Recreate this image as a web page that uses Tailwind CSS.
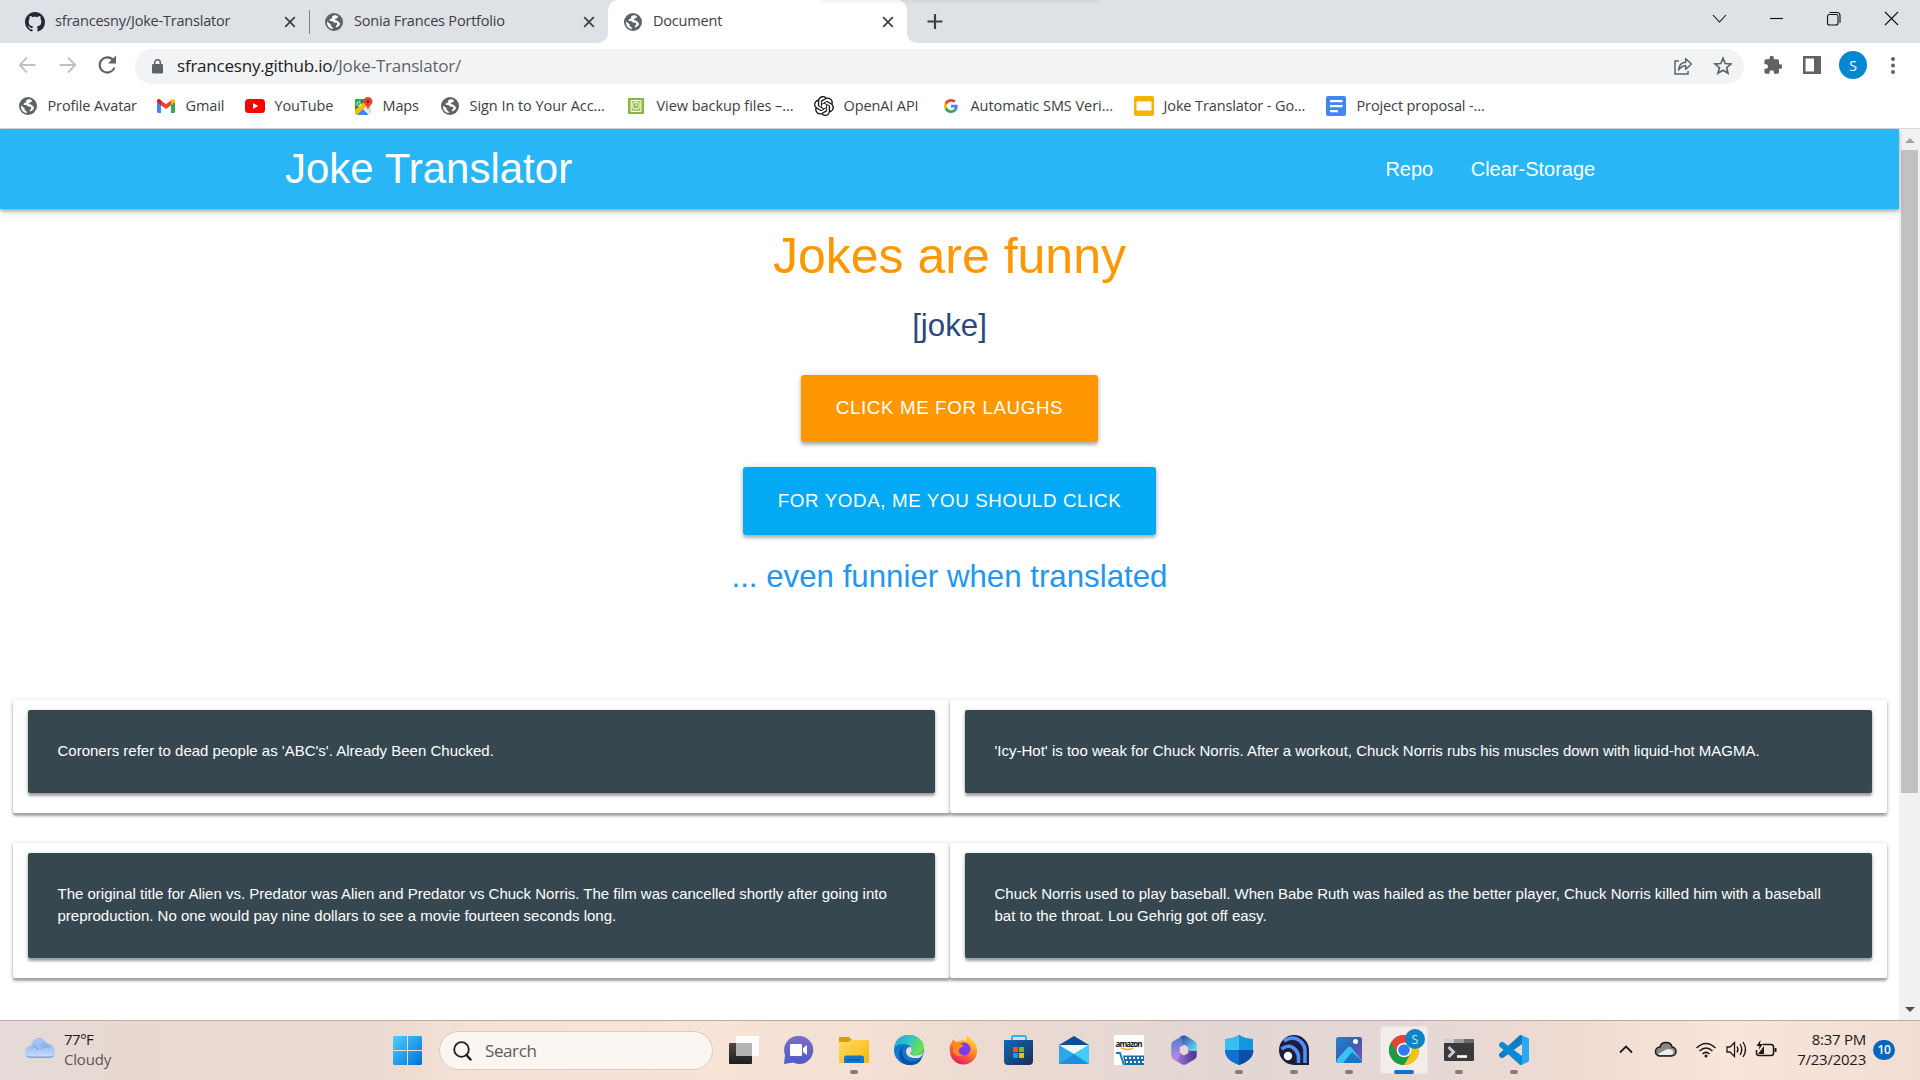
<!DOCTYPE html>
<html lang="en">
<head>
<meta charset="utf-8">
<title>Document</title>
<script src="https://cdn.jsdelivr.net/npm/@tailwindcss/browser@4"></script>
</head>
<body class="w-[1920px] h-[1080px] overflow-hidden bg-white flex flex-col font-['Open_Sans','Noto_Sans',sans-serif] text-[#3c4043]">
<svg class="hidden">
  <symbol id="globe" viewBox="0 0 18 18"><circle cx="9" cy="9" r="9" fill="#5f6368"/><path fill="#fff" d="M2 8.500l3.600 2.700v1.600l2.200 2v1.200C4.500 15.800 2 13 2 9.500zM10 2.100c-1 .8-2.500.4-2.900 1.600-.2.900.4 1.300-.2 1.900-.9.500-2.200.5-2.300 1.600 0 .8 1 1 2.200.9 1.200 0 1.700 1.500 2.800 1.600h2.200c.7 1 .5 1.900-.2 2.500-.7.600-.8 1.500-.8 2.400 2-.6 3.600-1.900 4.400-3.700-.8-1-.9-2.100-1.900-2.500-1.300-.3-1.700-1.500-3.300-1.300-.7-.7.200-1.400 1.200-1.500 1.100-.2 1.500-1.300 1.800-2.300z"/></symbol>
  <symbol id="x" viewBox="0 0 12 12"><path d="M1.200 1.200l9.600 9.600M10.800 1.200L1.200 10.800" stroke="#3c4043" stroke-width="1.700" fill="none"/></symbol>
</svg>

<!-- Tab strip -->
<header class="h-[43px] shrink-0 bg-[#dee1e6] flex items-stretch relative">
  <div class="w-[311px] h-[43px] flex items-center pl-[25px] border-r border-transparent">
    <svg class="w-5 h-5 shrink-0" viewBox="0 0 16 16" fill="#24292f"><path d="M8 0C3.580 0 0 3.580 0 8c0 3.540 2.290 6.530 5.470 7.590.4.070.55-.17.55-.38 0-.19-.01-.82-.01-1.490-2.010.37-2.530-.49-2.690-.94-.09-.23-.48-.94-.82-1.130-.28-.15-.68-.52-.01-.53.63-.01 1.080.58 1.230.82.72 1.210 1.870.87 2.330.66.07-.52.28-.87.51-1.070-1.780-.2-3.640-.89-3.640-3.950 0-.87.31-1.590.82-2.150-.08-.2-.36-1.020.08-2.120 0 0 .67-.21 2.200.82.64-.18 1.320-.27 2-.27s1.360.09 2 .27c1.530-1.040 2.200-.82 2.200-.82.44 1.100.16 1.920.08 2.120.51.56.82 1.270.82 2.150 0 3.070-1.870 3.750-3.650 3.950.29.25.54.73.54 1.480 0 1.070-.01 1.930-.01 2.200 0 .21.15.46.55.38A8.010 8.010 0 0 0 16 8c0-4.420-3.580-8-8-8z"/></svg>
    <span class="ml-[10px] -mt-[2px] w-[229px] text-[14.5px] tracking-[-0.2px] whitespace-nowrap">sfrancesny/Joke-Translator</span>
    <svg class="w-3 h-3 shrink-0"><use href="#x"/></svg>
  </div>
  <div class="w-[297px] flex items-center relative pl-[14px] before:absolute before:left-[-2px] before:top-[10px] before:w-px before:h-6 before:bg-[#808388]">
    <svg class="w-[18px] h-[18px] shrink-0"><use href="#globe"/></svg>
    <span class="ml-[11px] -mt-[2px] w-[229px] text-[14.5px] tracking-[-0.2px] whitespace-nowrap">Sonia Frances Portfolio</span>
    <svg class="w-3 h-3 shrink-0"><use href="#x"/></svg>
  </div>
  <div class="w-[299px] flex items-center bg-white rounded-t-[10px] relative pl-4">
    <svg class="absolute left-[-10px] bottom-0 w-[10px] h-[10px]"><path d="M10 0v10H0A10 10 0 0 0 10 0z" fill="#fff"/></svg>
    <svg class="absolute right-[-10px] bottom-0 w-[10px] h-[10px]"><path d="M0 0v10h10A10 10 0 0 1 0 0z" fill="#fff"/></svg>
    <svg class="w-[18px] h-[18px] shrink-0"><use href="#globe"/></svg>
    <span class="ml-[11px] -mt-[2px] w-[229px] text-[14.5px] tracking-[-0.2px]">Document</span>
    <svg class="w-3 h-3 shrink-0"><use href="#x"/></svg>
  </div>
  <svg class="ml-5 w-4 h-[43px]" viewBox="0 0 16 43"><path d="M8 14v15M.5 21.500h15" stroke="#3c4043" stroke-width="2.200"/></svg>
  <svg class="ml-auto w-[212px] h-[38px]" viewBox="0 0 212 38" fill="none" stroke="#111" stroke-width="1.100"><path d="M5 15l6.500 7 6.500-7"/><path d="M62 18.500h13"/><rect x="119.500" y="14.500" width="10.500" height="10.500" rx="2"/><path d="M121.500 12.500h7.500a3 3 0 0 1 3 3v7.500"/><path d="M177 12l13 13M190 12l-13 13"/></svg>
  <div class="absolute left-[820px] top-0 w-[280px] h-[5px] bg-linear-to-b from-black/5 to-transparent"></div>
</header>

<!-- Toolbar -->
<div class="h-[45px] shrink-0 flex items-center pl-[19px]">
  <svg class="w-[99px] h-[22px] mr-[17px] -mt-px" viewBox="0 0 99 22" fill="none"><g stroke="#bdc1c6" stroke-width="1.800"><path d="M16.500 11H1M8 3.500L.7 11 8 18.500M40.500 11H56M49 3.500l7.300 7.500-7.300 7.500"/></g><path d="M94.500 6.500A7.600 7.600 0 1 0 95.500 13.500" stroke="#5f6368" stroke-width="2.100"/><path d="M97 1.500v8h-8z" fill="#5f6368"/></svg>
  <div class="w-[1609px] h-[35px] rounded-full bg-[#f1f3f4] flex items-center pl-[17px] pr-3 mt-[1px]">
    <svg class="w-[11px] h-[15px]" viewBox="0 0 11 15"><rect y="5" width="11" height="9.500" rx="1.300" fill="#5f6368"/><path d="M2.700 6V3.600a2.800 2.800 0 0 1 5.600 0V6" fill="none" stroke="#5f6368" stroke-width="1.500"/></svg>
    <span class="ml-[14px] text-[17px] tracking-[-0.22px] text-[#5f6368] whitespace-nowrap"><span class="text-[#202124]">sfrancesny.github.io</span>/Joke-Translator/</span>
    <svg class="ml-auto w-[58px] h-5" viewBox="0 0 58 20" fill="none" stroke="#5f6368" stroke-width="1.500"><path d="M5 5H1v13h13v-3"/><path d="M4.500 14c.5-5 3-7.500 7.200-7.700V2.800L17.500 8l-5.800 5.200V9.800C8.500 9.800 6.500 11 4.500 14z" stroke-linejoin="round"/><path d="M49 2.200l2.200 5.300 5.800.5-4.400 3.700 1.400 5.600-5-3-5 3 1.400-5.600L41 8l5.800-.5z" stroke-width="1.700"/></svg>
  </div>
  <svg class="ml-5 w-[18px] h-[20px] -mt-px" viewBox="1.500 0.500 21 22.500" fill="#5f6368"><path d="M20.500 11H19V7c0-1.100-.9-2-2-2h-4V3.500a2.500 2.500 0 0 0-5 0V5H4c-1.100 0-2 .9-2 2v3.800h1.500a2.700 2.700 0 0 1 0 5.400H2V20c0 1.100.9 2 2 2h3.800v-1.500a2.700 2.700 0 0 1 5.400 0V22H17c1.100 0 2-.9 2-2v-4h1.500a2.500 2.500 0 0 0 0-5z"/></svg>
  <svg class="ml-[21px] w-[18px] h-[18px] -mt-px" viewBox="0 0 18 18"><path d="M0 0h18v18H0z" fill="#5f6368"/><path d="M2.500 2.500h8.500v13H2.500z" fill="#fff"/></svg>
  <div class="ml-[18px] -mt-px w-7 h-7 rounded-full bg-[#0288d1] text-white text-[14px] flex items-center justify-center">S</div>
  <svg class="ml-[24px] -mt-px w-1 h-[17px]" viewBox="0 0 4 17" fill="#5f6368"><circle cx="2" cy="2" r="2"/><circle cx="2" cy="8.500" r="2"/><circle cx="2" cy="15" r="2"/></svg>
</div>

<!-- Bookmarks -->
<nav class="h-[41px] shrink-0 border-b border-[#d5d7da] flex items-center pl-[19px] pb-[4px] text-[14.5px] tracking-[-0.12px] whitespace-nowrap [&_span]:-mt-[1px] [&_span]:-ml-[0.5px]">
  <div class="w-[138px] flex items-center gap-[11px]"><svg class="w-[18px] h-[18px]"><use href="#globe"/></svg><span>Profile Avatar</span></div>
  <div class="w-[88px] flex items-center gap-[11px]"><svg class="w-[18px] h-[14px]" viewBox="0 0 18 14"><path d="M0 2v10.500Q0 14 1.300 14H4V5z" fill="#4285f4"/><path d="M18 2v10.500q0 1.500-1.300 1.500H14V5z" fill="#34a853"/><path d="M4 1.200l5 4 5-4v5L9 10 4 6.200z" fill="#ea4335"/><path d="M14 1.200Q18-1.500 18 2.500V3l-4 3.200z" fill="#fbbc04"/><path d="M4 1.200Q0-1.500 0 2.500V3l4 3.200z" fill="#c5221f"/></svg><span>Gmail</span></div>
  <div class="w-[109px] flex items-center gap-[10px]"><svg class="w-5 h-[14px]" viewBox="0 0 20 14"><rect width="20" height="14" rx="3.500" fill="#f00"/><path d="M8 4l5.200 3L8 10z" fill="#fff"/></svg><span>YouTube</span></div>
  <div class="w-[87px] flex items-center gap-[10px]"><svg class="w-[19px] h-[19px]" viewBox="0 0 19 19"><path d="M2 2h10L3 17q-2 0-2-2V3.500Q1 2 2 2z" fill="#1e8e3e"/><path d="M1 13L12 3l2 5L4 18Q1 18 1 15z" fill="#fbbc04"/><path d="M1 10l8-8H3Q1 2 1 4z" fill="#34a853"/><path d="M3 18l6-6 6 6z" fill="#4285f4"/><path d="M10 11l6 6q1-1 1-2V9z" fill="#dadce0"/><path d="M14 0a4.500 4.500 0 0 1 4.500 4.500C18.500 8 15 8 14 13 13 8 9.500 8 9.500 4.500A4.500 4.500 0 0 1 14 0z" fill="#ea4335"/><circle cx="14" cy="4.500" r="1.600" fill="#8c1d18"/><path d="M6.500 5.500A2 2 0 1 0 7 7H5" fill="none" stroke="#fff" stroke-width=".9"/></svg><span>Maps</span></div>
  <div class="w-[187px] flex items-center gap-[11px]"><svg class="w-[18px] h-[18px]"><use href="#globe"/></svg><span class="tracking-[-0.05px]">Sign In to Your Acc...</span></div>
  <div class="w-[186px] flex items-center gap-[13px]"><svg class="w-4 h-4" viewBox="0 0 16 16"><path d="M0 0h16v16H0z" fill="#8bb53c"/><path d="M3 2.500h10v11H3z" fill="#a9cb6c" stroke="#fff"/><circle cx="8" cy="7.500" r="3.300" fill="#8bb53c" stroke="#fff"/><path d="M8 5.500v2.200h1.500" stroke="#fff" fill="none"/></svg><span class="tracking-[-0.05px]">View backup files –...</span></div>
  <div class="w-[127px] flex items-center gap-[10px]"><svg class="w-5 h-5" viewBox="0 0 24 24" fill="#111"><path d="M22.282 9.821a5.985 5.985 0 0 0-.516-4.910 6.046 6.046 0 0 0-6.510-2.900A6.065 6.065 0 0 0 4.981 4.182a5.985 5.985 0 0 0-3.998 2.900 6.046 6.046 0 0 0 .743 7.097 5.980 5.980 0 0 0 .511 4.911 6.051 6.051 0 0 0 6.515 2.900A5.985 5.985 0 0 0 13.260 24a6.056 6.056 0 0 0 5.772-4.206 5.990 5.990 0 0 0 3.998-2.900 6.056 6.056 0 0 0-.747-7.073zM13.260 22.430a4.476 4.476 0 0 1-2.876-1.041l.141-.08 4.779-2.758a.795.795 0 0 0 .392-.681v-6.737l2.020 1.169a.071.071 0 0 1 .038.052v5.583a4.504 4.504 0 0 1-4.494 4.494zM3.600 18.304a4.470 4.470 0 0 1-.535-3.014l.142.085 4.783 2.759a.771.771 0 0 0 .780 0l5.843-3.369v2.332a.080.080 0 0 1-.033.062L9.740 19.950a4.500 4.500 0 0 1-6.140-1.646zM2.340 7.896a4.485 4.485 0 0 1 2.366-1.973V11.600a.766.766 0 0 0 .388.676l5.815 3.355-2.020 1.168a.076.076 0 0 1-.071 0l-4.830-2.786A4.504 4.504 0 0 1 2.340 7.872zm16.597 3.855l-5.833-3.387L15.119 7.200a.076.076 0 0 1 .071 0l4.830 2.791a4.494 4.494 0 0 1-.676 8.105v-5.678a.790.790 0 0 0-.407-.667zm2.010-3.023l-.141-.085-4.774-2.782a.776.776 0 0 0-.785 0L9.409 9.230V6.897a.066.066 0 0 1 .028-.061l4.830-2.787a4.500 4.500 0 0 1 6.680 4.660zm-12.640 4.135l-2.020-1.164a.080.080 0 0 1-.038-.057V6.075a4.500 4.500 0 0 1 7.375-3.453l-.142.080L8.704 5.460a.795.795 0 0 0-.393.681zm1.097-2.365l2.602-1.500 2.607 1.500v2.999l-2.597 1.500-2.607-1.500z"/></svg><span>OpenAI API</span></div>
  <div class="w-[193px] flex items-center gap-[13px] pl-[3px]"><svg class="w-[14px] h-[14px]" viewBox="0 0 48 48"><path fill="#EA4335" d="M24 9.500c3.540 0 6.710 1.220 9.210 3.600l6.850-6.850C35.900 2.380 30.470 0 24 0 14.620 0 6.510 5.380 2.560 13.220l7.980 6.190C12.430 13.720 17.740 9.500 24 9.500z"/><path fill="#4285F4" d="M46.980 24.550c0-1.570-.15-3.090-.38-4.550H24v9.020h12.940c-.58 2.960-2.260 5.480-4.780 7.180l7.730 6c4.510-4.180 7.090-10.360 7.090-17.650z"/><path fill="#FBBC05" d="M10.530 28.590a14.500 14.500 0 0 1 0-9.180l-7.980-6.190a24 24 0 0 0 0 21.560z"/><path fill="#34A853" d="M24 48c6.480 0 11.930-2.130 15.890-5.810l-7.730-6c-2.150 1.450-4.920 2.300-8.160 2.300-6.260 0-11.570-4.220-13.470-9.910l-7.980 6.190C6.510 42.620 14.620 48 24 48z"/></svg><span class="tracking-[-0.05px]">Automatic SMS Veri...</span></div>
  <div class="w-[192px] flex items-center gap-[10px]"><svg class="w-5 h-5" viewBox="0 0 20 20"><rect width="20" height="20" rx="2" fill="#f5b400"/><path d="M2.500 5.500h15v9h-15z" fill="#fff"/></svg><span>Joke Translator - Go...</span></div>
  <div class="flex items-center gap-[11px]"><svg class="w-5 h-5" viewBox="0 0 20 20"><rect width="20" height="20" rx="2" fill="#4285f4"/><path d="M4 4h12.500v2.200H4zM4 9h12.500v2.200H4zM4 14h8v2.200H4z" fill="#fff"/></svg><span>Project proposal -...</span></div>
</nav>

<!-- Page -->
<div class="flex h-[891px] shrink-0">
  <main class="w-[1899px] font-['Liberation_Sans',Arial,sans-serif]">
    <div class="h-20 bg-[#29b6f6] shadow-[0_2px_3px_rgba(0,0,0,.25),0_4px_6px_rgba(0,0,0,.12)] px-[285px] flex items-center justify-between text-white relative">
      <h1 class="text-[42px] -mt-[2px]">Joke Translator</h1>
      <div class="flex text-[20px]"><a class="px-[18.75px]">Repo</a><a class="px-[18.75px]">Clear-Storage</a></div>
    </div>
    <section class="h-[491px] flex flex-col items-center">
      <h2 class="mt-[19px] h-[57px] leading-[57px] text-[50px] text-[#ff9800]">Jokes are funny</h2>
      <p class="mt-[23px] h-9 leading-9 text-[31.25px] text-[#2b4a7b]">[joke]</p>
      <button class="mt-[31px] h-[67px] px-[35px] rounded-[3px] bg-[#ff9800] text-white text-[18.75px] tracking-[0.625px] shadow-[0_2.5px_3px_rgba(0,0,0,.2),0_1px_6px_rgba(0,0,0,.2)]">CLICK ME FOR LAUGHS</button>
      <button class="mt-[25px] h-[68px] px-[35px] rounded-[3px] bg-[#03a9f4] text-white text-[18.75px] tracking-[0.625px] shadow-[0_2.5px_3px_rgba(0,0,0,.2),0_1px_6px_rgba(0,0,0,.2)]">FOR YODA, ME YOU SHOULD CLICK</button>
      <p class="mt-[24px] h-9 leading-9 text-[31.25px] text-[#2196f3]">... even funnier when translated</p>
    </section>
    <section class="pl-[13px] pr-3 grid grid-cols-2 gap-y-[30px] text-[15px] leading-[22px] text-white">
      <div class="h-[113px] rounded-[2px] px-[15px] pt-[10px] bg-white shadow-[0_2.5px_2.5px_rgba(0,0,0,.3),0_1px_5px_rgba(0,0,0,.18)]"><div class="h-[83px] rounded-[2px] bg-[#37474f] py-[30px] px-[29.5px] shadow-[0_2.5px_2.5px_rgba(0,0,0,.3),0_1px_5px_rgba(0,0,0,.18)]">Coroners refer to dead people as 'ABC's'. Already Been Chucked.</div></div>
      <div class="h-[113px] rounded-[2px] px-[15px] pt-[10px] bg-white shadow-[0_2.5px_2.5px_rgba(0,0,0,.3),0_1px_5px_rgba(0,0,0,.18)]"><div class="h-[83px] rounded-[2px] bg-[#37474f] py-[30px] px-[29.5px] shadow-[0_2.5px_2.5px_rgba(0,0,0,.3),0_1px_5px_rgba(0,0,0,.18)]">'Icy-Hot' is too weak for Chuck Norris. After a workout, Chuck Norris rubs his muscles down with liquid-hot MAGMA.</div></div>
      <div class="h-[135px] rounded-[2px] px-[15px] pt-[10px] bg-white shadow-[0_2.5px_2.5px_rgba(0,0,0,.3),0_1px_5px_rgba(0,0,0,.18)]"><div class="h-[105px] rounded-[2px] bg-[#37474f] py-[30px] px-[29.5px] shadow-[0_2.5px_2.5px_rgba(0,0,0,.3),0_1px_5px_rgba(0,0,0,.18)]">The original title for Alien vs. Predator was Alien and Predator vs Chuck Norris. The film was cancelled shortly after going into<br>preproduction. No one would pay nine dollars to see a movie fourteen seconds long.</div></div>
      <div class="h-[135px] rounded-[2px] px-[15px] pt-[10px] bg-white shadow-[0_2.5px_2.5px_rgba(0,0,0,.3),0_1px_5px_rgba(0,0,0,.18)]"><div class="h-[105px] rounded-[2px] bg-[#37474f] py-[30px] px-[29.5px] shadow-[0_2.5px_2.5px_rgba(0,0,0,.3),0_1px_5px_rgba(0,0,0,.18)]">Chuck Norris used to play baseball. When Babe Ruth was hailed as the better player, Chuck Norris killed him with a baseball<br>bat to the throat. Lou Gehrig got off easy.</div></div>
    </section>
  </main>
  <div class="w-[21px] bg-[#f1f1f1] flex flex-col items-center justify-between">
    <div class="flex flex-col items-center"><svg class="w-[10px] h-[21px]" viewBox="0 0 10 21"><path d="M0 14l5-5 5 5z" fill="#a3a3a3"/></svg><div class="w-[17px] h-[643px] bg-[#c1c1c1]"></div></div>
    <svg class="w-[10px] h-[21px]" viewBox="0 0 10 21"><path d="M0 8l5 5 5-5z" fill="#505050"/></svg>
  </div>
</div>

<!-- Taskbar -->
<footer class="h-[60px] shrink-0 border-t border-[#b9aaa5] bg-[linear-gradient(90deg,#e5dad9_0%,#e7d9d0_7%,#ebd9d2_14%,#ebdad1_20%,#f6e2d7_25%,#f7e4d6_38%,#f3dfd3_46%,#e9d9d2_54%,#e3d7d4_64%,#e6d8d4_75%,#f1dcd2_83%,#f9e5da_90%,#f1ddd3_100%)] flex items-center">
  <div class="w-[393px] pl-[25px] flex items-center">
    <svg class="w-[30px] h-5 -mt-[6px]" viewBox="0 0 30 20"><defs><linearGradient id="c" x1="0" y1="0" x2="0" y2="1"><stop stop-color="#8fb0ec"/><stop offset="1" stop-color="#c9e2fc"/></linearGradient></defs><path d="M6 9a8 8 0 0 1 16-2z" fill="#a6c2f4"/><path d="M6 20a6 6 0 0 1 0-12q2-3 8-1c5-5 16-1 16 7 0 4-3 6-6 6z" fill="url(#c)"/><path d="M1 17q1 3 5 3h18q4 0 5-3-2 1.500-5 1.500H6Q3 18.500 1 17z" fill="#7e9fe4"/><path d="M8 8.500q4 0 5 3.500M16 11q3-4 8-2" stroke="#86a8e8" fill="none" stroke-width="1.500"/></svg>
    <div class="ml-[9px] text-[15px] leading-5 tracking-[-0.2px] text-[#5f5652] -mt-[3px]"><div class="text-[#1b1b1b] tracking-[-0.5px]">77°F</div><div>Cloudy</div></div>
  </div>
  <svg class="w-[29px] h-[29px]" viewBox="0 0 29 29"><defs><linearGradient id="w" x1="0" y1="0" x2="1" y2="1"><stop stop-color="#4cd0ff"/><stop offset="1" stop-color="#0072d2"/></linearGradient></defs><path d="M1 0h13v14H0V1zM15 0h13l1 1v13H15zM0 15h14v14H1l-1-1zM15 15h14v13l-1 1H15z" fill="url(#w)"/></svg>
  <div class="ml-[17px] w-[274px] h-[39px] rounded-full bg-[#fcf6f2] border border-[#d9cbc4] flex items-center pl-[13px]">
    <svg class="w-[19px] h-[20px]" viewBox="0 0 19 20" fill="none" stroke="#202020"><circle cx="8.500" cy="8.500" r="7.300" stroke-width="1.800"/><path d="M13.500 14l4 4.500" stroke-width="2.500" stroke-linecap="round"/></svg>
    <span class="ml-[13px] text-[17px] tracking-[-0.4px] text-[#605c5a]">Search</span>
  </div>
  <div class="ml-[3px] flex h-full *:w-[55px] *:h-[59px]">
    <svg viewBox="0 0 55 59"><defs><linearGradient id="tv" x1="0" y1="0" x2="0" y2="1"><stop stop-color="#4a4a4a"/><stop offset="1" stop-color="#1c1c1c"/></linearGradient><linearGradient id="ch" x1="0" y1="0" x2="0" y2="1"><stop stop-color="#7c6fc4"/><stop offset="1" stop-color="#5059c9"/></linearGradient></defs><rect x="13" y="22" width="23" height="21" rx="1" fill="url(#tv)"/><rect x="20" y="15" width="23" height="20" rx="1" fill="#fff" fill-opacity=".9"/><path d="M20 22h16v13H20z" fill="#b4b4b4"/></svg>
    <svg viewBox="0 0 55 59"><path d="M28 15a14 14 0 1 1-6 26.500L13 43l1-9A14 14 0 0 1 28 15z" fill="url(#ch)"/><rect x="19" y="23" width="12" height="12" rx="1" fill="#fff"/><path d="M32 27l4-3v10l-4-3z" fill="#fff"/></svg>
    <svg viewBox="0 0 55 59"><defs><linearGradient id="fo" x1="0" y1="0" x2="1" y2="1"><stop stop-color="#ffd968"/><stop offset="1" stop-color="#fcb900"/></linearGradient></defs><path d="M13 16h10l3 3h16v5H13z" fill="#dd9b06"/><path d="M13 21h9l3-2h18v22q0 1-1 1H14q-1 0-1-1z" fill="url(#fo)"/><path d="M18 42v-5q0-2.500 2.500-2.500h15Q38 34.500 38 37v5z" fill="#0f78d0"/><path d="M21 39h13" stroke="#0a4a90"/><rect x="24" y="49" width="8" height="4" rx="2" fill="#877b76"/></svg>
    <svg viewBox="0 0 55 59"><defs><linearGradient id="e1" x1="0" y1="0" x2="1" y2=".4"><stop stop-color="#1ba4e4"/><stop offset=".5" stop-color="#2fc3c8"/><stop offset="1" stop-color="#6fe04e"/></linearGradient></defs><circle cx="28" cy="29" r="15" fill="#1178d0"/><path d="M13.200 27C14 18 20 14 28 14c9 0 15 6 15 12.500 0 5-4 8-9 8-4 0-5.500-1.500-4-3.500 2-3 0-6-4-7.500-5-1.500-10 0-12.800 3.500z" fill="url(#e1)"/><path d="M24 24c-6 6-2 15 6 16.500 4 .5 8-1 10.500-4.500 0 5-6 9-13 8-10-1-13-14-3.500-20z" fill="#0d4fa4"/><path d="M25 30c0 5 5 8.500 14 6.500l3-3 1-3c-2 3-5 4-9 4-4 0-5.500-1.500-4-3.500 1.500-2 .5-5-1-5-2 0-4 2-4 4z" fill="#efe0d8"/></svg>
    <svg viewBox="0 0 55 59"><defs><linearGradient id="ff" x1=".8" y1="0" x2=".3" y2="1"><stop stop-color="#ffe93c"/><stop offset=".45" stop-color="#ff8b2a"/><stop offset="1" stop-color="#e91560"/></linearGradient></defs><path d="M31 14c5 4 10 8 10 15a13.500 13.500 0 0 1-27 2c-1-4 0-8 2-10l1-3 3 3c2-1 4-1 5-1l2-2c1 1 1 2 3 2q0-3 1-6z" fill="url(#ff)"/><circle cx="28" cy="28" r="6.500" fill="#7b3bea"/><path d="M17 22c3 0 8 0 11 3-3 1-5 2-5 4-1 3 2 5 5 5-5 3-10 0-11-4z" fill="#ff8b1a"/></svg>
    <svg viewBox="0 0 55 59"><defs><linearGradient id="st" x1="0" y1="0" x2="1" y2="1"><stop stop-color="#0a6cbc"/><stop offset="1" stop-color="#1e2c50"/></linearGradient></defs><path d="M21 19v-2.500q0-1.500 1.500-1.500h11q1.500 0 1.500 1.500V19" fill="none" stroke="#2bb4ee" stroke-width="2"/><path d="M13 19h29v21q0 4-4 4H17q-4 0-4-4z" fill="url(#st)"/><path d="M22 26h5v5h-5z" fill="#f25022"/><path d="M28 26h5v5h-5z" fill="#7fba00"/><path d="M22 32h5v5h-5z" fill="#00a4ef"/><path d="M28 32h5v5h-5z" fill="#ffb900"/></svg>
    <svg viewBox="0 0 55 59"><path d="M13 24l15-9 15 9z" fill="#0d4f96"/><path d="M16 24h24v9H16z" fill="#f4f4f4"/><path d="M13 24l15 9 15-9v19H13z" fill="#2ba8e8"/><path d="M28 33l15-9v19h-4z" fill="#41cdf6"/><path d="M13 43l15-10 15 10z" fill="#1c8fe0"/></svg>
    <svg viewBox="0 0 55 59"><path d="M13 14h30v30H13z" fill="#fff"/><text x="14.500" y="25.500" font-size="8" font-weight="700" textLength="27" fill="#111">amazon</text><path d="M20 27q7 3 12 0" stroke="#f90" stroke-width="1.300" fill="none"/><path d="M15 32h4l4 12" stroke="#1a7ab8" stroke-width="2" fill="none"/><path d="M22 34.500h21V44H24z" fill="#1a6ca8"/><path d="M24 37h19M25 41h18" stroke="#fff" stroke-width="2" stroke-dasharray="2 2"/></svg>
    <svg viewBox="0 0 55 59" fill="none" stroke-width="8.500" stroke-linejoin="round"><defs><linearGradient id="m1" x1="0" y1="0" x2="1" y2="1"><stop stop-color="#3a5fb0"/><stop offset="1" stop-color="#5fd0f5"/></linearGradient><linearGradient id="m2" x1="0" y1="0" x2="0" y2="1"><stop stop-color="#5a7fd0"/><stop offset="1" stop-color="#b48ae4"/></linearGradient><linearGradient id="m4" x1="0" y1="0" x2="1" y2="0"><stop stop-color="#a47be0"/><stop offset="1" stop-color="#5a3c96"/></linearGradient></defs><path d="M19.500 34.500l8.500 5 8.500-5V29" stroke="url(#m4)"/><path d="M28 19l-8.500 4.800v10.700l3 1.800" stroke="url(#m2)"/><path d="M26 19.500l2-1 8.500 5.300V30" stroke="url(#m1)"/></svg>
    <svg viewBox="0 0 55 59"><path d="M28 14q6 4 14 4v12q0 9-14 14-14-5-14-14V18q8 0 14-4z" fill="#0f6fd2"/><path d="M28 14v15H14V18q8 0 14-4z" fill="#37bff0"/><path d="M28 14v15h14V18q-8 0-14-4z" fill="#1794e0"/><path d="M28 29h14.500q0 10-14.500 15z" fill="#0d4fa6"/><rect x="24" y="49" width="8" height="4" rx="2" fill="#877b76"/></svg>
    <svg viewBox="0 0 55 59"><path d="M13 29a15 15 0 0 1 30 0v15H28a15 15 0 0 1-15-15z" fill="#1c1c3c"/><path d="M18 20q9-6 16 0 5 4 5 10v12M15.500 28q7-5 12-1 5 4 5 9v6" fill="none" stroke="#4f8ff8" stroke-width="3.600"/><circle cx="22" cy="35" r="4.200" fill="#fff"/><rect x="24" y="49" width="8" height="4" rx="2" fill="#877b76"/></svg>
    <svg viewBox="0 0 55 59"><defs><linearGradient id="ph" x1="0" y1="0" x2="1" y2="1"><stop stop-color="#168ad8"/><stop offset=".5" stop-color="#3a5cb4"/><stop offset="1" stop-color="#8d4fae"/></linearGradient></defs><rect x="15" y="16" width="26" height="26" rx="2.500" fill="url(#ph)"/><path d="M15.500 39L27 26q1.500-1 3 0l11 14q0 2-3 2H18q-2 0-2.500-3z" fill="#37c4f2"/><path d="M22 42l9-11 10 9q0 2-3 2z" fill="#1976c8"/><circle cx="34.500" cy="20.500" r="2.500" fill="#fff"/><rect x="24" y="49" width="8" height="4" rx="2" fill="#877b76"/></svg>
    <svg viewBox="0 0 55 59"><rect x="4" y="5" width="48" height="48" rx="4" fill="#f3edea" stroke="#e0d5d0" stroke-width=".6"/><circle cx="28" cy="29" r="15" fill="#34a853"/><path d="M28 29L15 21.500A15 15 0 0 1 41 21.500z" fill="#ea4335"/><path d="M28 21.500h13A15 15 0 0 1 28 44l6.500-11.300z" fill="#fbc116"/><path d="M15 21.500L21.500 33 28 29V21.500z" fill="#ea4335"/><path d="M15 21.500A15 15 0 0 0 28 44l6.500-11.300L28 36q-5 0-6.500-3.500z" fill="#1e9a46"/><circle cx="28" cy="29" r="7.300" fill="#fff"/><circle cx="28" cy="29" r="5.800" fill="#2f7af0"/><circle cx="39" cy="18" r="10" fill="#0d84c6"/><text x="39" y="22.500" font-size="12.500" text-anchor="middle" fill="#cfe6f4">S</text><rect x="18" y="49" width="20" height="4" rx="2" fill="#0a74d4"/></svg>
    <svg viewBox="0 0 55 59"><rect x="13" y="18" width="30" height="22" rx="1.500" fill="#3a3a3a"/><path d="M13 22v-3q0-1 1-1h9v4z" fill="#d0d0d0"/><path d="M23 18h10v4H23z" fill="#999"/><path d="M33 18h9q1 0 1 1v3H33z" fill="#6a6a6a"/><path d="M17.500 26l5 5-5 5" stroke="#ccc" stroke-width="3" fill="none"/><path d="M26 35.500h10" stroke="#fff" stroke-width="2.600"/><rect x="24" y="49" width="8" height="4" rx="2" fill="#877b76"/></svg>
    <svg viewBox="0 0 55 59"><path d="M36 14l-2 0L13 33v2l2 2 2 0L36 23z" fill="#0f7cc4"/><path d="M36 44h-2L13 25v-2l2-2h2l19 14z" fill="#0a8ad6"/><path d="M35 14l7 3 1 1v22l-1 1-7 3q1-1 1-2V16q0-1-1-2z" fill="#2ba8f4"/><rect x="24" y="49" width="8" height="4" rx="2" fill="#877b76"/></svg>
  </div>
  <svg class="ml-[77px] w-[159px] h-6 mt-[-3px]" viewBox="1618 1038 159 24" fill="none" stroke="#1a1a1a" stroke-width="1.500"><path d="M1620 1053.500l6-6 6 6" stroke-width="1.800"/><path d="M1660 1057a4.500 4.500 0 0 1 0-9q1-4.500 6-4.500c4 0 5.500 2 6 4.500a4.500 4.500 0 0 1-1 9z" fill="#8b8785"/><path d="M1658 1055l8-4.500q4-1.500 7 1 1 3-2 4.500h-11z" fill="#eee" stroke="none"/><path d="M1696.500 1049q9.500-9 19 0M1699.500 1052q6.500-6 13 0M1702.500 1055q3.500-3.200 7 0"/><circle cx="1706" cy="1057" r="1.500" fill="#1a1a1a" stroke="none"/><path d="M1727 1048h3l4.500-4.500v14L1730 1053h-3zM1737 1047.500q2 3 0 6M1740 1045q3.500 5.500 0 11M1743 1043q5 7.500 0 15" stroke-width="1.300"/><path d="M1763 1045.500h8q2.500 0 2.500 2.500v6q0 2.500-2.500 2.500h-12q-2.500 0-2.500-2.500v-3"/><path d="M1774.500 1049h2v4h-2z" fill="#1a1a1a" stroke="none"/><path d="M1758 1055h6v-8z" fill="#1a1a1a" stroke="none"/><path d="M1760.500 1041l-4 6h3l-1 4 4.500-6h-3z" fill="#1a1a1a" stroke="none"/></svg>
  <div class="w-[89px] text-right text-[15px] leading-5 tracking-[-0.25px] text-[#1b1b1b] -mt-[3px] whitespace-nowrap"><div>8:37 PM</div><div>7/23/2023</div></div>
  <div class="ml-[7px] -mt-[2px] w-[22px] h-5 rounded-full bg-[#0067c0] text-white text-[12px] font-semibold flex items-center justify-center tracking-[-0.3px]">10</div>
</footer>
</body>
</html>
